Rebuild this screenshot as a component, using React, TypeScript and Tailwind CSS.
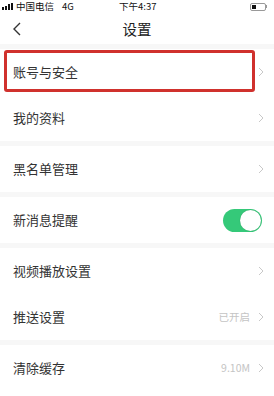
import React from "react";

const Chevron = () => (
  <svg width="6" height="10" viewBox="0 0 6 10" className="shrink-0">
    <path d="M1 1 L5 5 L1 9" fill="none" stroke="#c8c8c8" strokeWidth="1" />
  </svg>
);

function Row({ label, value, toggle, highlight }: { label: string; value?: string; toggle?: boolean; highlight?: boolean }) {
  return (
    <div className="relative h-[46px] flex items-center pl-[13px] pr-[10px] bg-white">
      {highlight && (
        <div className="absolute left-[4px] top-[1px] w-[251px] h-[42px] border-[3px] border-[#d0312d] rounded-[3px]" />
      )}
      <span className="flex-1 text-[13px] text-[#333]">{label}</span>
      {value && <span className="text-[10.5px] text-[#c4c4c4] mr-[8px]">{value}</span>}
      {toggle ? (
        <div className="w-[39px] h-[23px] rounded-full bg-[#35c979] relative mr-[2px]">
          <div className="absolute right-[1px] top-[1px] w-[21px] h-[21px] rounded-full bg-white shadow-[0_0_1px_rgba(0,0,0,0.3)]" />
        </div>
      ) : (
        <Chevron />
      )}
    </div>
  );
}

const Sep = () => <div className="h-[5px] bg-[#f7f7f7]" />;

export default function App() {
  return (
    <div className="w-[274px] h-[396px] bg-white overflow-hidden" style={{ fontFamily: '"Noto Sans CJK SC", "Noto Sans", sans-serif' }}>
      {/* status bar */}
      <div className="h-[13px] flex items-center px-[2px] text-[9.5px] text-[#111] relative">
        <div className="flex items-end gap-[1px] h-[7px] mr-[3px]">
          <div className="w-[2px] h-[3px] bg-[#111]" />
          <div className="w-[2px] h-[4px] bg-[#111]" />
          <div className="w-[2px] h-[6px] bg-[#111]" />
          <div className="w-[2px] h-[7px] bg-[#111]" />
        </div>
        <span>中国电信</span>
        <span className="ml-[8px]">4G</span>
        <span className="absolute left-[119px] top-[0px] leading-[13px]">下午4:37</span>
        <div className="ml-auto mr-[5px] flex items-center">
          <div className="w-[16px] h-[8px] border border-[#999] rounded-[2px] p-[1px]">
            <div className="w-[4px] h-full bg-[#111]" />
          </div>
          <div className="w-[1px] h-[3px] bg-[#999]" />
        </div>
      </div>
      {/* nav */}
      <div className="h-[31px] flex items-center relative">
        <svg width="10" height="14" viewBox="0 0 10 14" className="absolute left-[12px] top-[9px]">
          <path d="M8 1 L2 7 L8 13" fill="none" stroke="#333" strokeWidth="1.4" />
        </svg>
        <span className="mx-auto text-[14.5px] text-[#222]">设置</span>
      </div>
      <Sep />
      <Row label="账号与安全" highlight />
      <Row label="我的资料" />
      <Sep />
      <Row label="黑名单管理" />
      <Sep />
      <Row label="新消息提醒" toggle />
      <Sep />
      <Row label="视频播放设置" />
      <Row label="推送设置" value="已开启" />
      <Sep />
      <Row label="清除缓存" value="9.10M" />
    </div>
  );
}
